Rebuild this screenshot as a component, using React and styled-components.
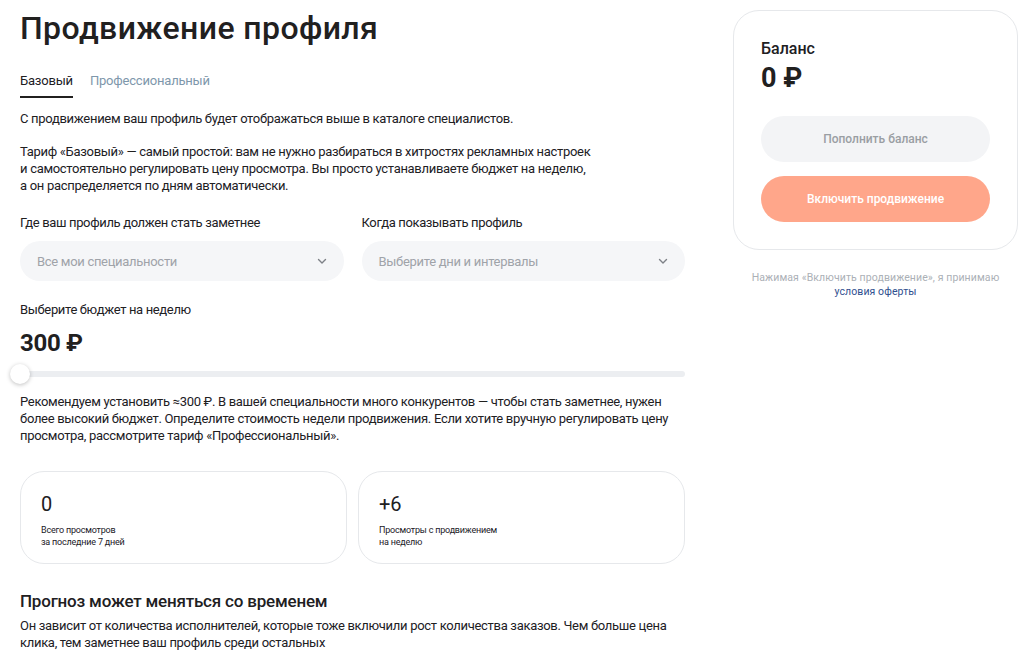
import React from "react"
import styled, { createGlobalStyle } from "styled-components"

const GlobalStyle = createGlobalStyle`
  html, body {
    margin: 0;
    padding: 0;
    background: #fff;
  }
  body {
    font-family: Roboto, "Noto Sans", Arial, sans-serif;
    color: #21201f;
    -webkit-font-smoothing: antialiased;
  }
  * { box-sizing: border-box; }
`

const Page = styled.div`
  display: grid;
  grid-template-columns: 665px 285px;
  column-gap: 48px;
  padding: 10px 0 0 20px;
  align-items: start;
`

const Main = styled.main`
  display: flex;
  flex-direction: column;
`

const Title = styled.h1`
  margin: 0;
  font-size: 32px;
  line-height: 36px;
  font-weight: 500;
  letter-spacing: 0.4px;
`

const Tabs = styled.div`
  display: flex;
  gap: 17px;
  margin-top: 27px;
`

const Tab = styled.div`
  font-size: 13px;
  line-height: 16px;
  letter-spacing: -0.2px;
  padding-bottom: 7px;
  color: ${(p) => (p.$active ? "#21201f" : "#7e97ab")};
  border-bottom: 2px solid ${(p) => (p.$active ? "#21201f" : "transparent")};
`

const Text = styled.p`
  margin: ${(p) => p.$mt || 0}px 0 0;
  font-size: 13px;
  line-height: 17px;
  letter-spacing: -0.3px;
  color: #21201f;
`

const Fields = styled.div`
  display: grid;
  grid-template-columns: 1fr 1fr;
  gap: 18px;
  margin-top: 20px;
`

const Field = styled.div`
  display: flex;
  flex-direction: column;
  gap: 10px;
`

const Label = styled.div`
  font-size: 13px;
  line-height: 17px;
  letter-spacing: -0.35px;
`

const Select = styled.div`
  height: 40px;
  border-radius: 20px;
  background: #f5f6f8;
  display: flex;
  align-items: center;
  justify-content: space-between;
  padding: 0 16px 0 17px;
  font-size: 13px;
  letter-spacing: -0.3px;
  color: #9fa3a9;
`

const BudgetLabel = styled(Label)`
  margin-top: 20px;
`

const Amount = styled.div`
  margin-top: 10px;
  font-size: 24px;
  line-height: 30px;
  font-weight: 700;
  letter-spacing: -0.3px;
`

const Slider = styled.div`
  position: relative;
  height: 6px;
  margin: 13px 0 0;
  border-radius: 3px;
  background: #eceef1;
`

const Thumb = styled.div`
  position: absolute;
  left: -10px;
  top: -7px;
  width: 20px;
  height: 20px;
  border-radius: 50%;
  background: #fff;
  box-shadow: 0 1px 4px rgba(0, 0, 0, 0.25);
`

const Stats = styled.div`
  display: grid;
  grid-template-columns: 327px 327px;
  gap: 11px;
  margin-top: 27px;
`

const StatCard = styled.div`
  height: 93px;
  border: 1px solid #e6e8eb;
  border-radius: 24px;
  padding: 20px 20px;
`

const StatValue = styled.div`
  font-size: 20px;
  line-height: 24px;
`

const StatCaption = styled.div`
  margin-top: 8px;
  font-size: 9px;
  line-height: 12px;
  letter-spacing: -0.2px;
`

const Subtitle = styled.h2`
  margin: 26px 0 0;
  font-size: 17px;
  line-height: 22px;
  font-weight: 500;
  letter-spacing: -0.2px;
`

const Aside = styled.aside`
  display: flex;
  flex-direction: column;
  align-items: center;
`

const BalanceCard = styled.div`
  width: 100%;
  border: 1px solid #e6e8eb;
  border-radius: 26px;
  padding: 28px 27px 27px 27px;
  display: flex;
  flex-direction: column;
`

const BalanceLabel = styled.div`
  font-size: 16px;
  line-height: 20px;
  font-weight: 500;
`

const BalanceValue = styled.div`
  margin-top: 3px;
  font-size: 27px;
  line-height: 32px;
  font-weight: 700;
`

const Button = styled.button`
  height: 46px;
  border: none;
  border-radius: 23px;
  margin-top: ${(p) => p.$mt}px;
  font-family: inherit;
  font-size: 12px;
  font-weight: 500;
  background: ${(p) => (p.$primary ? "#ffa68a" : "#f3f4f6")};
  color: ${(p) => (p.$primary ? "#fff" : "#9a9ea3")};
`

const Terms = styled.div`
  margin-top: 21px;
  font-size: 10.5px;
  line-height: 14px;
  letter-spacing: 0.1px;
  color: #abb0b6;
  text-align: center;
`

const TermsLink = styled.a`
  color: #2f4f8f;
  text-decoration: none;
`

const Chevron = () => (
  <svg width="12" height="12" viewBox="0 0 12 12" fill="none">
    <path d="M2.5 4.5L6 8l3.5-3.5" stroke="#7d8187" strokeWidth="1.4" strokeLinecap="round" strokeLinejoin="round" />
  </svg>
)

const App = () => {
  return (
    <>
      <GlobalStyle />
      <Page>
        <Main>
          <Title>Продвижение профиля</Title>
          <Tabs>
            <Tab $active>Базовый</Tab>
            <Tab>Профессиональный</Tab>
          </Tabs>
          <Text $mt={12}>
            С продвижением ваш профиль будет отображаться выше в каталоге специалистов.
          </Text>
          <Text $mt={16}>
            Тариф «Базовый» — самый простой: вам не нужно разбираться в хитростях рекламных настроек
            <br />и самостоятельно регулировать цену просмотра. Вы просто устанавливаете бюджет на неделю,
            <br />а он распределяется по дням автоматически.
          </Text>
          <Fields>
            <Field>
              <Label>Где ваш профиль должен стать заметнее</Label>
              <Select>
                Все мои специальности
                <Chevron />
              </Select>
            </Field>
            <Field>
              <Label>Когда показывать профиль</Label>
              <Select>
                Выберите дни и интервалы
                <Chevron />
              </Select>
            </Field>
          </Fields>
          <BudgetLabel>Выберите бюджет на неделю</BudgetLabel>
          <Amount>300 ₽</Amount>
          <Slider>
            <Thumb />
          </Slider>
          <Text $mt={16}>
            Рекомендуем установить ≈300 ₽. В вашей специальности много конкурентов — чтобы стать заметнее, нужен
            более высокий бюджет. Определите стоимость недели продвижения. Если хотите вручную регулировать цену
            просмотра, рассмотрите тариф «Профессиональный».
          </Text>
          <Stats>
            <StatCard>
              <StatValue>0</StatValue>
              <StatCaption>
                Всего просмотров
                <br />
                за последние 7 дней
              </StatCaption>
            </StatCard>
            <StatCard>
              <StatValue>+6</StatValue>
              <StatCaption>
                Просмотры с продвижением
                <br />
                на неделю
              </StatCaption>
            </StatCard>
          </Stats>
          <Subtitle>Прогноз может меняться со временем</Subtitle>
          <Text $mt={5}>
            Он зависит от количества исполнителей, которые тоже включили рост количества заказов. Чем больше цена
            клика, тем заметнее ваш профиль среди остальных
          </Text>
        </Main>
        <Aside>
          <BalanceCard>
            <BalanceLabel>Баланс</BalanceLabel>
            <BalanceValue>0 ₽</BalanceValue>
            <Button $mt={22}>Пополнить баланс</Button>
            <Button $primary $mt={14}>
              Включить продвижение
            </Button>
          </BalanceCard>
          <Terms>
            Нажимая «Включить продвижение», я принимаю
            <br />
            <TermsLink href="#">условия оферты</TermsLink>
          </Terms>
        </Aside>
      </Page>
    </>
  )
}

export default App
